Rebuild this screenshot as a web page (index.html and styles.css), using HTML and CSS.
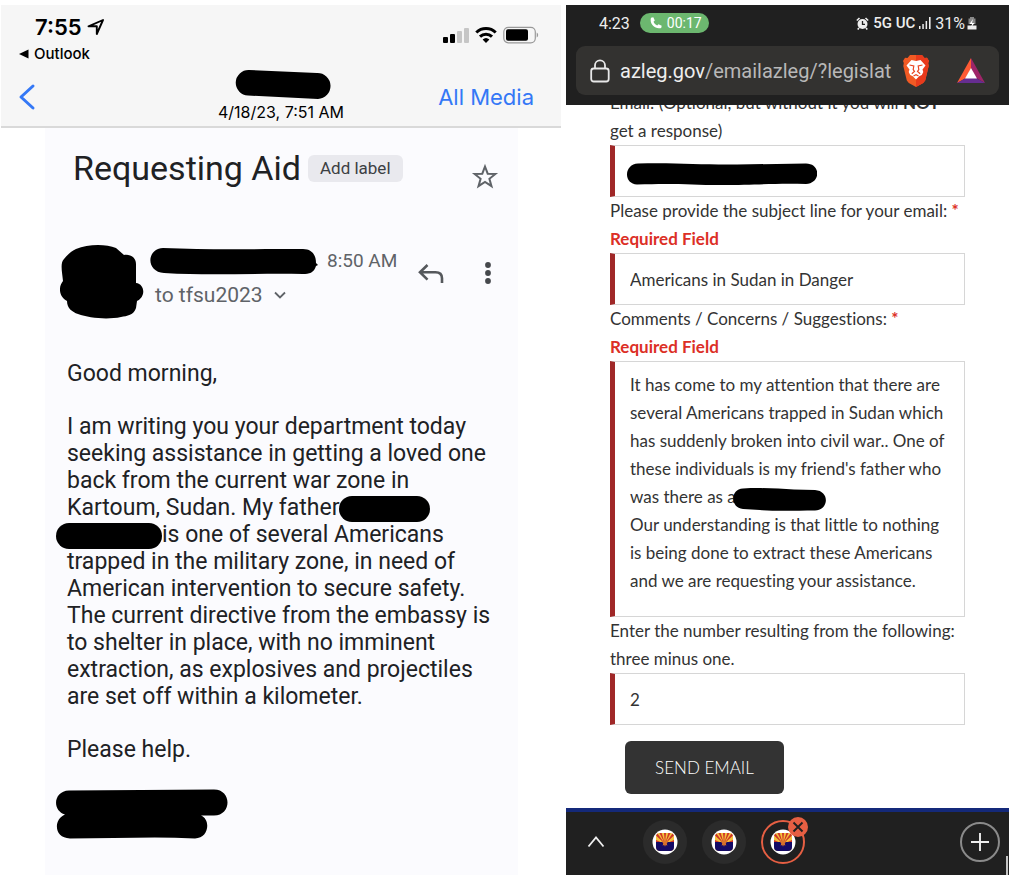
FILE: index.html
```
<!DOCTYPE html>
<html lang="en">
<head>
    <meta charset="UTF-8">
    <meta name="viewport" content="width=device-width,initial-scale=1">
    <title>Requesting Aid</title>
    <link rel="stylesheet" href="styles.css">
</head>
<body>
    <!-- Arizona flag favicon, shared by the browser tabs -->
    <svg class="defs" width="0" height="0" aria-hidden="true">
        <symbol id="az" viewBox="0 0 26 26">
            <circle cx="13" cy="13" r="12.5" fill="#fff"/>
            <rect x="4" y="4" width="18" height="18" rx="4" fill="#f3c03c"/>
            <g fill="#cf3527">
                <path d="M13 15 4 11v3zM13 15 4 6.500l1.500-2zM13 15 7.500 4h2.200zM13 15 12 4h2zM13 15 16.300 4h2.200zM13 15 20.500 4.500l1.500 2zM13 15 22 11v3z"/>
            </g>
            <path d="M4 13h18v5a4 4 0 0 1-4 4H8a4 4 0 0 1-4-4z" fill="#140a66"/>
            <path d="m13 10 1 2.300h2.600l-1.800 1.900.5 2.600-1.600-1-.3 1.400h-.8l-.3-1.400-1.600 1 .5-2.600-1.800-1.900H12z" fill="#d9722b"/>
        </symbol>
    </svg>

    <div class="shots">
        <section class="phone">
            <header class="ios-head">
                <div class="ios-status">
                    <div>
                        <div class="ios-time">7:55
                            <svg width="18" height="18" viewBox="0 0 18 18"><path d="M1.500 8.300 16 2 9.800 16V8.300z" fill="none" stroke="#000" stroke-width="1.900" stroke-linejoin="round"/></svg>
                        </div>
                        <a class="ios-return" href="#">
                            <svg width="10" height="10" viewBox="0 0 10 10"><path d="M0 5 9.500.5v9z"/></svg>
                            Outlook
                        </a>
                    </div>
                    <div class="ios-icons">
                        <svg width="26" height="18" viewBox="0 0 26 18">
                            <rect y="11" width="5" height="6" rx="1"/>
                            <rect x="7" y="8" width="5" height="9" rx="1"/>
                            <rect x="14" y="5" width="5" height="12" rx="1" fill="#c6c6c6"/>
                            <rect x="21" y="2" width="5" height="15" rx="1" fill="#c6c6c6"/>
                        </svg>
                        <svg width="22" height="18" viewBox="0 0 22 18">
                            <g fill="none" stroke="#000" stroke-width="3">
                                <path d="M1.300 6.500a14 14 0 0 1 19.400 0"/>
                                <path d="M5 10.600a8.700 8.700 0 0 1 12 0"/>
                            </g>
                            <path d="m11 17-3.400-3.400a5 5 0 0 1 6.800 0z"/>
                        </svg>
                        <svg width="36" height="18" viewBox="0 0 36 18">
                            <rect x=".8" y="1.300" width="31.500" height="15.500" rx="4.500" fill="none" stroke="#999" stroke-width="1.200"/>
                            <rect x="3" y="3.300" width="22" height="11.500" rx="2"/>
                            <path d="M33.700 6.500v5c1.900-.8 1.900-4.200 0-5z" fill="#999"/>
                        </svg>
                    </div>
                </div>
                <nav class="ios-nav">
                    <button class="back" aria-label="Back">
                        <svg width="18" height="28" viewBox="0 0 18 28"><path d="M15 3 3 14l12 11" fill="none" stroke="#3478f6" stroke-width="3" stroke-linecap="round" stroke-linejoin="round"/></svg>
                    </button>
                    <div class="stamp">
                        <svg width="102" height="31" viewBox="0 0 102 31"><path d="M19 1 87 4a13 13 0 0 1 1 26L18 26.500A12.700 12.700 0 0 1 19 1z"/></svg>
                        <time>4/18/23, 7:51 AM</time>
                    </div>
                    <a class="all-media" href="#">All Media</a>
                </nav>
            </header>

            <article class="mail">
                <div class="subject">
                    <h1>Requesting Aid</h1>
                    <button class="add-label">Add label</button>
                    <button class="star" aria-label="Star">
                        <svg width="28" height="28" viewBox="0 0 28 28"><path d="m14 3.500 2.700 7.200 7.700.3-6 4.800 2.100 7.400-6.500-4.200-6.500 4.200 2.100-7.400-6-4.800 7.700-.3z" fill="none" stroke="#5f6368" stroke-width="2"/></svg>
                    </button>
                </div>

                <div class="sender">
                    <svg class="avatar" width="84" height="75" viewBox="0 0 84 75"><path d="M16 4C28-1 46-1 56 3l8 7c7-1 12 3 12 9v19c9 1 10 14 1 18l-1 7c-2 7-9 8-15 9-14 3-32 1-43-3-6-2-11-6-11-13-8-4-9-14-4-20-1-10-3-18 1-22 4-5 8-8 12-10z"/></svg>
                    <div class="who">
                        <div class="who-line">
                            <svg width="168" height="28" viewBox="0 0 168 28"><path d="M13 1c45 2 88 1 140 1 9 0 13 6 13 14l2 2-2 1c-2 7-7 8-13 8-50-1-90 2-139-1C-4 25-4 2 13 1z"/></svg>
                            <time>8:50 AM</time>
                        </div>
                        <button class="to">to tfsu2023
                            <svg width="12" height="8" viewBox="0 0 12 8"><path d="m1 1.500 5 5 5-5" fill="none" stroke="#5f6368" stroke-width="1.800"/></svg>
                        </button>
                    </div>
                    <button class="reply" aria-label="Reply">
                        <svg width="26" height="22" viewBox="0 0 26 22"><path d="M9.500 2 2 9.300l7.500 7.300M2 9.300h15.500q6.500 0 6.500 6v4.700" fill="none" stroke="#55585c" stroke-width="2.600"/></svg>
                    </button>
                    <button class="more" aria-label="More">
                        <svg width="6" height="22" viewBox="0 0 6 22" fill="#45484c"><circle cx="3" cy="3" r="2.900"/><circle cx="3" cy="11" r="2.900"/><circle cx="3" cy="19" r="2.900"/></svg>
                    </button>
                </div>

                <div class="letter">
                    <p>Good morning,</p>
                    <p>I am writing you your department today<br>
                    seeking assistance in getting a loved one<br>
                    back from the current war zone in<br>
                    Kartoum, Sudan. My father<span class="redact name"></span><br>
                    <span class="redact surname"></span>is one of several Americans<br>
                    trapped in the military zone, in need of<br>
                    American intervention to secure safety.<br>
                    The current directive from the embassy is<br>
                    to shelter in place, with no imminent<br>
                    extraction, as explosives and projectiles<br>
                    are set off within a kilometer.</p>
                    <p>Please help.</p>
                </div>
                <svg class="signature" width="172" height="51" viewBox="0 0 172 51"><path d="M13 1.500 158 .5c18 0 18 26 0 26h-13c10 4 8 23-6 23-40-2-80 0-125 0-16 0-17-19-5-24C-4 22-3 2 13 1.500z"/></svg>
            </article>
        </section>

        <section class="phone android">
            <header class="and-head">
                <div class="and-status">
                    <span>4:23</span>
                    <span class="call">
                        <svg width="12" height="12" viewBox="0 0 12 12"><path d="M1 .8 3.300.3 4.800 3.500 3.500 4.800c.8 1.700 2 2.900 3.700 3.700l1.300-1.300 3.200 1.500-.5 2.300C5 12.800-.8 7 1 .8z" fill="#fff"/></svg>
                        00:17
                    </span>
                    <span class="and-icons">
                        <svg width="13" height="13" viewBox="0 0 13 13">
                            <circle cx="6.500" cy="7" r="5" fill="#eee"/>
                            <path d="M.8 3.500 3.500 1M12.200 3.500 9.500 1M3 11l-1.300 1.500M10 11l1.300 1.500" stroke="#eee" stroke-width="1.600"/>
                            <path d="M6.500 4v3.300H9" fill="none" stroke="#202020" stroke-width="1.300"/>
                        </svg>
                        <b>5G UC</b>
                        <svg width="12" height="12" viewBox="0 0 12 12" fill="#eee"><path d="M0 9h1.500v3H0zM3.300 7h1.500v5H3.300zM6.600 4h1.500v8H6.600zM10 0h1.600v12H10z"/></svg>
                        <span class="charge">31%
                            <svg width="10" height="13" viewBox="0 0 10 13"><path d="M3 0h4v1.500h1.500V7h-7V1.500H3z" fill="#888"/><path d="M.5 8.500h9v4h-9z" fill="#eee"/><path d="M6 2 2.500 7H5l-1 3.500L7.500 6H5z" fill="#fff"/></svg>
                        </span>
                    </span>
                </div>
                <div class="url-bar">
                    <svg class="lock" width="20" height="24" viewBox="0 0 20 24"><rect x="1.200" y="9.500" width="17.500" height="13" rx="2.500" fill="none" stroke="#e8e8e8" stroke-width="1.800"/><path d="M5 9.500V6.300a5 5 0 0 1 10 0v3.200" fill="none" stroke="#e8e8e8" stroke-width="1.800"/></svg>
                    <div class="url"><span>azleg.gov</span>/emailazleg/?legislat</div>
                    <svg class="brave" width="28" height="32" viewBox="0 0 28 32">
                        <path d="M8 0h12l2.500 3 2.500-.3L27 6l-.8 2 .5 3-3.500 14.500-2 2.500L14 32l-7.200-4-2-2.500L1.300 11l.5-3L1 6l2-3.300 2.500.3z" fill="#f15a24"/>
                        <path d="M14 0h6l2.500 3 2.500-.3L27 6l-.8 2 .5 3-3.500 14.500-2 2.500L14 32z" fill="#e83a1c"/>
                        <path d="m9.500 5 4.500 1 4.500-1 5 5.500-3 4 .8 2.500-1.500 3-2.600 1.300L14 24.500l-3.200-3.200L8.200 20l-1.500-3 .8-2.500-3-4z" fill="#fff"/>
                        <path d="m7.500 10 4.300 1-.6 3.500 1.300 2-2.700 2.300M20.500 10l-4.300 1 .6 3.500-1.300 2 2.700 2.300M11.500 21l2.500-1.300 2.500 1.300" fill="none" stroke="#ea4420" stroke-width="1.200"/>
                    </svg>
                    <svg class="bat" width="28" height="26" viewBox="0 0 28 26">
                        <path d="M14 0 0 25l9-5 5-9z" fill="#ff5a34"/>
                        <path d="m14 0 14 25-9-5-5-9z" fill="#9e2568"/>
                        <path d="M0 25h28l-9-5H9z" fill="#662d91"/>
                        <path d="m14 10-6 10.500h12z" fill="#fff"/>
                    </svg>
                </div>
            </header>

            <main class="web">
                <form>
                    <label for="email">Email: (Optional, but without it you will <b>NOT</b> get a response)</label>
                    <div class="field">
                        <input type="email" id="email">
                        <svg class="cover email-cover" width="190" height="22" viewBox="0 0 190 22"><path d="M11 .5C50-.5 75 2 110 1.500l69-1c15 0 15 20 0 20.500-30-1-50 1-85 1-30 0-45-2-84-.5C-4 21-3 1 11 .5z"/></svg>
                    </div>

                    <label for="subject">Please provide the subject line for your email: <span class="star-mark">*</span> <strong>Required Field</strong></label>
                    <div class="field">
                        <input type="text" id="subject" value="Americans in Sudan in Danger">
                    </div>

                    <label for="comments">Comments / Concerns / Suggestions: <span class="star-mark">*</span> <strong>Required Field</strong></label>
                    <div class="field">
                        <textarea id="comments">It has come to my attention that there are several Americans trapped in Sudan which has suddenly broken into civil war.. One of these individuals is my friend's father who was there as a
Our understanding is that little to nothing is being done to extract these Americans and we are requesting your assistance.</textarea>
                        <svg class="cover comment-cover" width="93" height="23" viewBox="0 0 93 23"><path d="M10 .5c17-1 35 0 51 1l21 .5c15 1 14 20 0 20.500-18 0-38 1-55-.5L10 21C-3 20-3 1 10 .5z"/></svg>
                    </div>

                    <label for="sum">Enter the number resulting from the following: three minus one.</label>
                    <div class="field">
                        <input type="text" id="sum" value="2">
                    </div>

                    <button type="button" class="send">SEND EMAIL</button>
                </form>
            </main>

            <footer class="tabs">
                <button class="expand" aria-label="Expand">
                    <svg width="18" height="12" viewBox="0 0 18 12"><path d="m1.500 10.500 7.500-9 7.500 9" fill="none" stroke="#eee" stroke-width="1.800"/></svg>
                </button>
                <button class="tab" aria-label="Tab 1"><svg width="26" height="26"><use href="#az"/></svg></button>
                <button class="tab" aria-label="Tab 2"><svg width="26" height="26"><use href="#az"/></svg></button>
                <button class="tab active" aria-label="Close tab 3"><svg width="26" height="26"><use href="#az"/></svg>
                    <svg class="close" width="20" height="20" viewBox="0 0 20 20"><circle cx="10" cy="10" r="10" fill="#e65f43"/><path d="m5.500 5.500 9 9m0-9-9 9" stroke="#202020" stroke-width="1.900"/></svg>
                </button>
                <button class="new-tab" aria-label="New tab">
                    <svg width="18" height="18" viewBox="0 0 18 18"><path d="M9 0v18M0 9h18" stroke="#eee" stroke-width="1.900"/></svg>
                </button>
                <span class="scrollbar"></span>
            </footer>
        </section>
    </div>
</body>
</html>
```
FILE: styles.css
```
* {
    box-sizing: border-box;
}
body {
    margin: 0;
    padding: 5px 1px 11px;
    background: #fff;
    font-family: Roboto, "Liberation Sans", sans-serif;
    color: #202124;
}
button {
    padding: 0;
    border: 0;
    background: none;
    font: inherit;
    color: inherit;
}
a {
    text-decoration: none;
}
svg {
    display: block;
    flex-shrink: 0;
}
.defs {
    position: absolute;
}
.shots {
    display: grid;
    grid-template-columns: 560fr 443fr;
    gap: 5px;
}
.phone {
    display: flex;
    flex-direction: column;
    min-width: 0;
}

/* left phone */
.ios-head {
    background: #f6f6f6;
    border-bottom: 2px solid #d9d9d9;
    font-family: Inter, sans-serif;
    color: #000;
}
.ios-status {
    display: flex;
    justify-content: space-between;
    height: 63px;
    padding: 8px 22px 0 18px;
}
.ios-time {
    display: flex;
    align-items: center;
    gap: 5px;
    padding-left: 16px;
    font-size: 22px;
    line-height: 28px;
    font-weight: 600;
}
.ios-return {
    display: flex;
    align-items: center;
    gap: 5px;
    font-size: 15px;
    line-height: 26px;
    font-weight: 500;
    color: #000;
}
.ios-icons {
    display: flex;
    gap: 6px;
    padding-top: 13px;
}
.ios-nav {
    display: grid;
    grid-template-columns: 1fr auto 1fr;
    align-items: center;
    height: 58px;
    padding: 0 27px;
}
.back {
    justify-self: start;
    margin-left: -10px;
}
.stamp {
    display: flex;
    flex-direction: column;
    align-items: center;
    padding-bottom: 2px;
    font-size: 16px;
    line-height: 24px;
}
.all-media {
    justify-self: end;
    font-size: 22px;
    color: #3478f6;
}
.mail {
    flex: 1;
    margin: 0 43px 0 44px;
    padding: 18px 20px 0 22px;
    background: #fbfbfe;
}
.subject {
    display: flex;
    align-items: center;
    height: 44px;
    padding-left: 6px;
}
.subject h1 {
    margin: 0;
    font-size: 34px;
    line-height: 40px;
    font-weight: 400;
}
.add-label {
    height: 27px;
    margin-left: 7px;
    padding: 0 12px;
    border-radius: 6px;
    background: #e9e9ee;
    font-size: 17px;
    color: #3c4043;
}
.star {
    margin: 18px -1px 0 auto;
}
.sender {
    display: flex;
    align-items: flex-start;
    margin-top: 55px;
}
.avatar {
    margin-left: -7px;
}
.who {
    flex: 1;
    margin-left: 6px;
    color: #5f6368;
}
.who-line {
    display: flex;
    align-items: center;
    gap: 9px;
    font-size: 19px;
    line-height: 32px;
}
.to {
    display: flex;
    align-items: center;
    gap: 11px;
    padding-left: 5px;
    font-size: 21px;
    line-height: 36px;
}
.reply {
    margin: 18px 41px 0 0;
}
.more {
    margin: 17px 7px 0 0;
}
.letter {
    margin-top: 40px;
    font-size: 23px;
    line-height: 27px;
    white-space: nowrap;
}
.letter p {
    margin: 0 0 26px;
}
.redact {
    display: inline-block;
    height: 26px;
    margin: -4px 0;
    border-radius: 13px;
    background: #000;
    vertical-align: middle;
}
.name {
    width: 91px;
}
.surname {
    width: 106px;
    margin-left: -11px;
}
.signature {
    margin-left: -11px;
}

/* right phone */
.and-head {
    height: 100px;
    padding: 8px 10px 0;
    background: #202020;
    color: #eee;
}
.and-status {
    display: flex;
    align-items: center;
    height: 20px;
    padding: 0 22px 0 23px;
    font-size: 16px;
}
.call {
    display: flex;
    align-items: center;
    gap: 5px;
    height: 20px;
    margin-left: 10px;
    padding: 0 7px 0 10px;
    border-radius: 10px;
    background: #6cb76f;
    font-size: 14px;
    color: #fff;
}
.and-icons {
    display: flex;
    align-items: center;
    gap: 4px;
    margin-left: auto;
}
.and-icons b {
    font-size: 15px;
    font-weight: 500;
}
.charge {
    display: flex;
    align-items: center;
    gap: 2px;
}
.url-bar {
    display: flex;
    align-items: center;
    height: 49px;
    margin-top: 13px;
    padding: 0 14px;
    border-radius: 9px;
    background: #333230;
}
.url {
    flex: 1;
    margin-left: 10px;
    white-space: nowrap;
    font-size: 20px;
    color: #b8b8b8;
}
.url span {
    color: #eee;
}
.bat {
    margin-left: 27px;
}
.web {
    overflow: hidden;
    padding: 0 44px 14px;
    font-family: Lato, sans-serif;
    font-size: 17px;
    line-height: 28px;
    font-variant-ligatures: none;
    color: #333;
}
.web form {
    margin-top: -16px;
}
.web label {
    display: block;
}
.web label strong {
    display: block;
    color: #dc2f26;
}
.star-mark {
    font-weight: 700;
    color: #dc2f26;
}
.field {
    position: relative;
}
.field input,
.field textarea {
    display: block;
    width: 100%;
    height: 52px;
    margin: 0;
    padding: 0 15px;
    border: 1px solid #d6d6d6;
    border-left: 5px solid #a02828;
    border-radius: 0;
    background: #fff;
    font: inherit;
    font-variant-ligatures: none;
    color: inherit;
    outline: 0;
}
.field textarea {
    height: 256px;
    padding: 9px 15px;
    overflow: hidden;
    resize: none;
}
.cover {
    position: absolute;
}
.email-cover {
    left: 17px;
    top: 18px;
}
.comment-cover {
    left: 123px;
    top: 127px;
}
.send {
    width: 159px;
    height: 53px;
    margin: 16px 0 0 15px;
    border-radius: 6px;
    background: #333;
    font-weight: 300;
    color: #fff;
}
.tabs {
    position: relative;
    display: flex;
    align-items: center;
    gap: 15px;
    height: 67px;
    padding: 0 9px 4px 21px;
    border-top: 4px solid #14297a;
    background: #202020;
}
.expand {
    margin-right: 23px;
}
.tab {
    position: relative;
    display: grid;
    place-items: center;
    width: 44px;
    height: 44px;
    border-radius: 50%;
    background: #2b2b2b;
}
.tab.active {
    border: 2px solid #e65f43;
    background: #202020;
}
.close {
    position: absolute;
    top: -5px;
    right: -5px;
}
.new-tab {
    display: grid;
    place-items: center;
    width: 40px;
    height: 40px;
    margin-left: auto;
    border: 2px solid #8a8a8a;
    border-radius: 50%;
}
.scrollbar {
    position: absolute;
    right: 1px;
    bottom: 0;
    width: 2px;
    height: 19px;
    background: #c4c4c4;
}
```
